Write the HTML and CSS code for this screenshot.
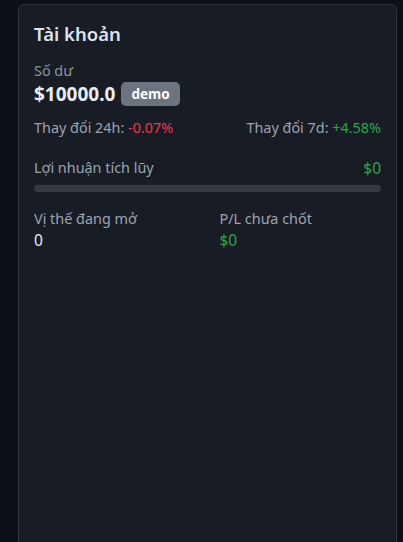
FILE: index.html
```html
<!DOCTYPE html>
<html lang="vi">
<head>
<meta charset="utf-8">
<link rel="stylesheet" href="styles.css">
</head>
<body>
<div class="page">
  <section class="card">
    <h2 class="title">Tài khoản</h2>
    <div class="balance-block">
      <div class="muted">Số dư</div>
      <div class="balance-row">
        <span class="balance">$10000.0</span>
        <span class="badge">demo</span>
      </div>
    </div>
    <div class="change-row">
      <div><span class="label">Thay đổi 24h:</span> <span class="neg">-0.07%</span></div>
      <div><span class="label">Thay đổi 7d:</span> <span class="pos">+4.58%</span></div>
    </div>
    <div class="profit-head">
      <span class="label">Lợi nhuận tích lũy</span>
      <span class="pos profit-value">$0</span>
    </div>
    <div class="bar"><div class="bar-fill" style="width:0%"></div></div>
    <div class="stats">
      <div>
        <div class="label">Vị thế đang mở</div>
        <div class="value">0</div>
      </div>
      <div>
        <div class="label">P/L chưa chốt</div>
        <div class="value pos">$0</div>
      </div>
    </div>
  </section>
</div>
</body>
</html>
```

FILE: styles.css
```css
* { box-sizing: border-box; }
html, body { margin: 0; height: 100%; }
body {
  background: #0c1018;
  font-family: "Noto Sans", "Open Sans", sans-serif;
  color: #c9d1d9;
  overflow: hidden;
}
.page {
  padding: 4px 6px 0 18px;
  height: 100%;
}
.card {
  background: #181c24;
  border: 1px solid #2f353d;
  border-radius: 6px;
  padding: 15px 15px;
  min-height: 600px;
}
.title {
  margin: 0 0 14px;
  font-size: 18.5px;
  font-weight: 600;
  color: #dde4ec;
  line-height: 28px;
}
.muted {
  color: #8b949e;
  font-size: 14.4px;
  line-height: 18px;
}
.balance-row {
  display: flex;
  align-items: center;
  gap: 6px;
  margin-top: 1px;
}
.balance {
  font-size: 19px;
  font-weight: 700;
  color: #e6edf3;
}
.badge {
  background: #6c757d;
  color: #fff;
  font-size: 13.5px;
  font-weight: 700;
  padding: 3px 10px;
  border-radius: 5px;
  line-height: 18px;
}
.change-row {
  display: flex;
  justify-content: space-between;
  margin-top: 11px;
  font-size: 14.4px;
  line-height: 20px;
}
.label { color: #9ba5b0; font-size: 14.4px; }
.neg { color: #ec3a4c; }
.pos { color: #2ea44f; }
.profit-head {
  display: flex;
  justify-content: space-between;
  align-items: flex-end;
  margin-top: 20px;
  line-height: 20px;
}
.profit-value { font-size: 15.5px; }
.bar {
  margin-top: 7px;
  height: 7px;
  border-radius: 4px;
  background: #353a42;
  overflow: hidden;
}
.bar-fill { height: 100%; background: #2ea44f; }
.stats {
  display: grid;
  grid-template-columns: 1fr 1fr;
  column-gap: 24px;
  margin-top: 17px;
  line-height: 20px;
}
.value {
  margin-top: 1px;
  font-size: 15.5px;
  color: #e6edf3;
}
.value.pos { color: #2ea44f; }
```
